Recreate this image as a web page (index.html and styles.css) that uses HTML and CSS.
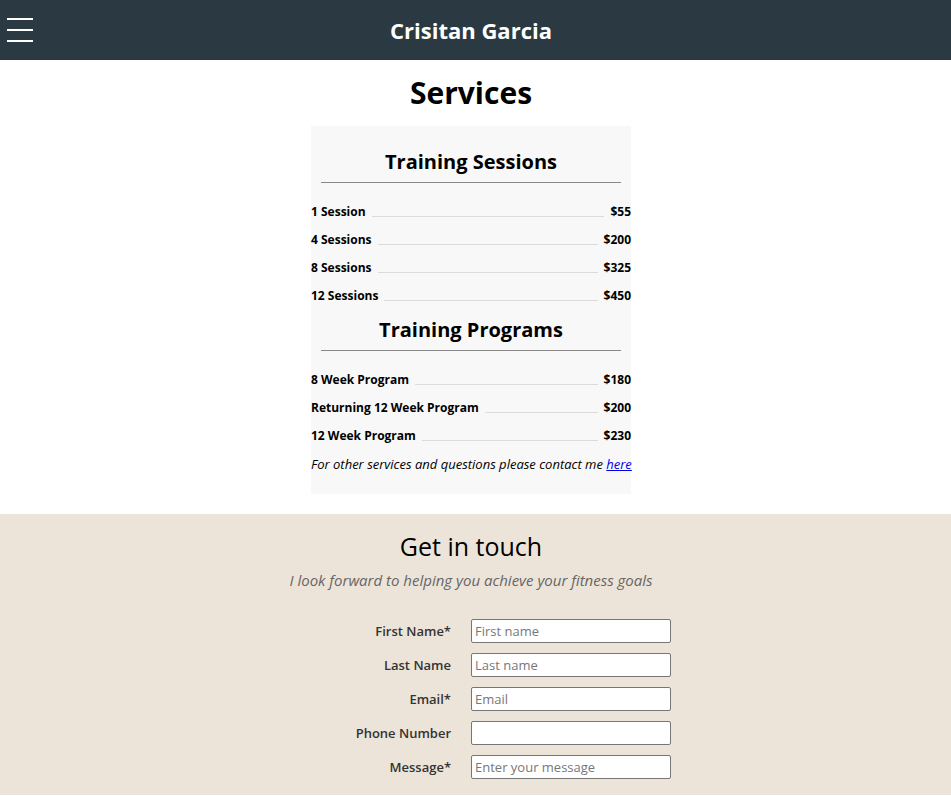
FILE: index.html
```html
<!DOCTYPE html>
<html>
<head>
<meta charset="utf-8">
<link rel="stylesheet" href="styles.css">
</head>
<body>
<header class="topbar">
  <button class="burger" aria-label="menu"><span></span><span></span><span></span></button>
  <div class="brand">Crisitan Garcia</div>
</header>
<main>
  <h1 class="page-title">Services</h1>
  <section class="card">
    <h2 class="card-title">Training Sessions</h2>
    <div class="rule"></div>
    <ul class="price-list">
      <li><span class="name">1 Session</span><span class="fill"></span><span class="price">$55</span></li>
      <li><span class="name">4 Sessions</span><span class="fill"></span><span class="price">$200</span></li>
      <li><span class="name">8 Sessions</span><span class="fill"></span><span class="price">$325</span></li>
      <li><span class="name">12 Sessions</span><span class="fill"></span><span class="price">$450</span></li>
    </ul>
    <h2 class="card-title">Training Programs</h2>
    <div class="rule"></div>
    <ul class="price-list">
      <li><span class="name">8 Week Program</span><span class="fill"></span><span class="price">$180</span></li>
      <li><span class="name">Returning 12 Week Program</span><span class="fill"></span><span class="price">$200</span></li>
      <li><span class="name">12 Week Program</span><span class="fill"></span><span class="price">$230</span></li>
    </ul>
    <p class="note">For other services and questions please contact me <a href="#">here</a></p>
  </section>
</main>
<section class="contact">
  <h2 class="contact-title">Get in touch</h2>
  <p class="contact-sub">I look forward to helping you achieve your fitness goals</p>
  <form class="form">
    <label>First Name*</label><input type="text" placeholder="First name">
    <label>Last Name</label><input type="text" placeholder="Last name">
    <label>Email*</label><input type="text" placeholder="Email">
    <label>Phone Number</label><input type="text">
    <label>Message*</label><input type="text" placeholder="Enter your message">
  </form>
</section>
</body>
</html>
```
FILE: styles.css
```css
* { box-sizing: border-box; }
html, body { margin: 0; padding: 0; }
body {
  font-family: "Open Sans", "Noto Sans", sans-serif;
  color: #000;
  background: #fff;
}
.topbar {
  height: 60px;
  background: #2b3a42;
  display: flex;
  align-items: center;
  justify-content: center;
  position: relative;
  padding-right: 9px;
}
.burger {
  position: absolute;
  left: 7px;
  top: 18px;
  width: 26px;
  height: 24px;
  padding: 0;
  border: 0;
  background: transparent;
  display: flex;
  flex-direction: column;
  justify-content: space-between;
}
.burger span {
  display: block;
  height: 2px;
  width: 26px;
  background: #fff;
}
.brand {
  color: #fff;
  font-weight: 700;
  font-size: 22px;
}
main {
  display: flex;
  flex-direction: column;
  align-items: center;
  padding: 0 9px 20px 0;
}
.page-title {
  margin: 13px 0 13px;
  font-size: 30px;
  font-weight: 700;
  line-height: 40px;
}
.card {
  width: 320px;
  background: #f8f8f8;
  padding: 18px 0 16px;
}
.card-title {
  margin: 0;
  text-align: center;
  font-size: 20px;
  font-weight: 700;
  line-height: 35px;
}
.rule {
  margin: 3px 10px 0;
  border-top: 1px solid #8a8a8a;
}
.price-list {
  list-style: none;
  margin: 15px 0 0;
  padding: 0;
}
.price-list li {
  display: flex;
  align-items: baseline;
  font-size: 12px;
  font-weight: 700;
  line-height: 28px;
  height: 28px;
}
.fill {
  flex: 1;
  border-bottom: 1px solid #dcdcdc;
  margin: 0 6px;
  transform: translateY(1px);
}
.price-list + .card-title { margin-top: 2px; }
.note {
  margin: 0;
  font-size: 13px;
  font-style: italic;
  line-height: 28px;
  white-space: nowrap;
}
.note a { color: #00e; }
.contact {
  background: #ede4d9;
  padding: 15px 9px 16px 0;
  display: flex;
  flex-direction: column;
  align-items: center;
}
.contact-title {
  margin: 0;
  font-size: 25px;
  font-weight: 400;
  line-height: 34px;
}
.contact-sub {
  margin: 0;
  font-size: 15px;
  font-style: italic;
  color: #666;
  line-height: 35px;
}
.form {
  margin-top: 21px;
  width: 100%;
  display: grid;
  grid-template-columns: 1fr 1fr;
  row-gap: 10px;
  align-items: center;
}
.form label {
  text-align: right;
  padding-right: 20px;
  font-size: 13px;
  font-weight: 600;
  color: #333;
}
.form input {
  height: 24px;
  width: 200px;
  border: 1px solid #767676;
  border-radius: 2px;
  padding: 0 3px;
  font-family: "Open Sans", sans-serif;
  font-size: 13px;
  background: #fff;
}
.form input::placeholder { color: #777; }
```
